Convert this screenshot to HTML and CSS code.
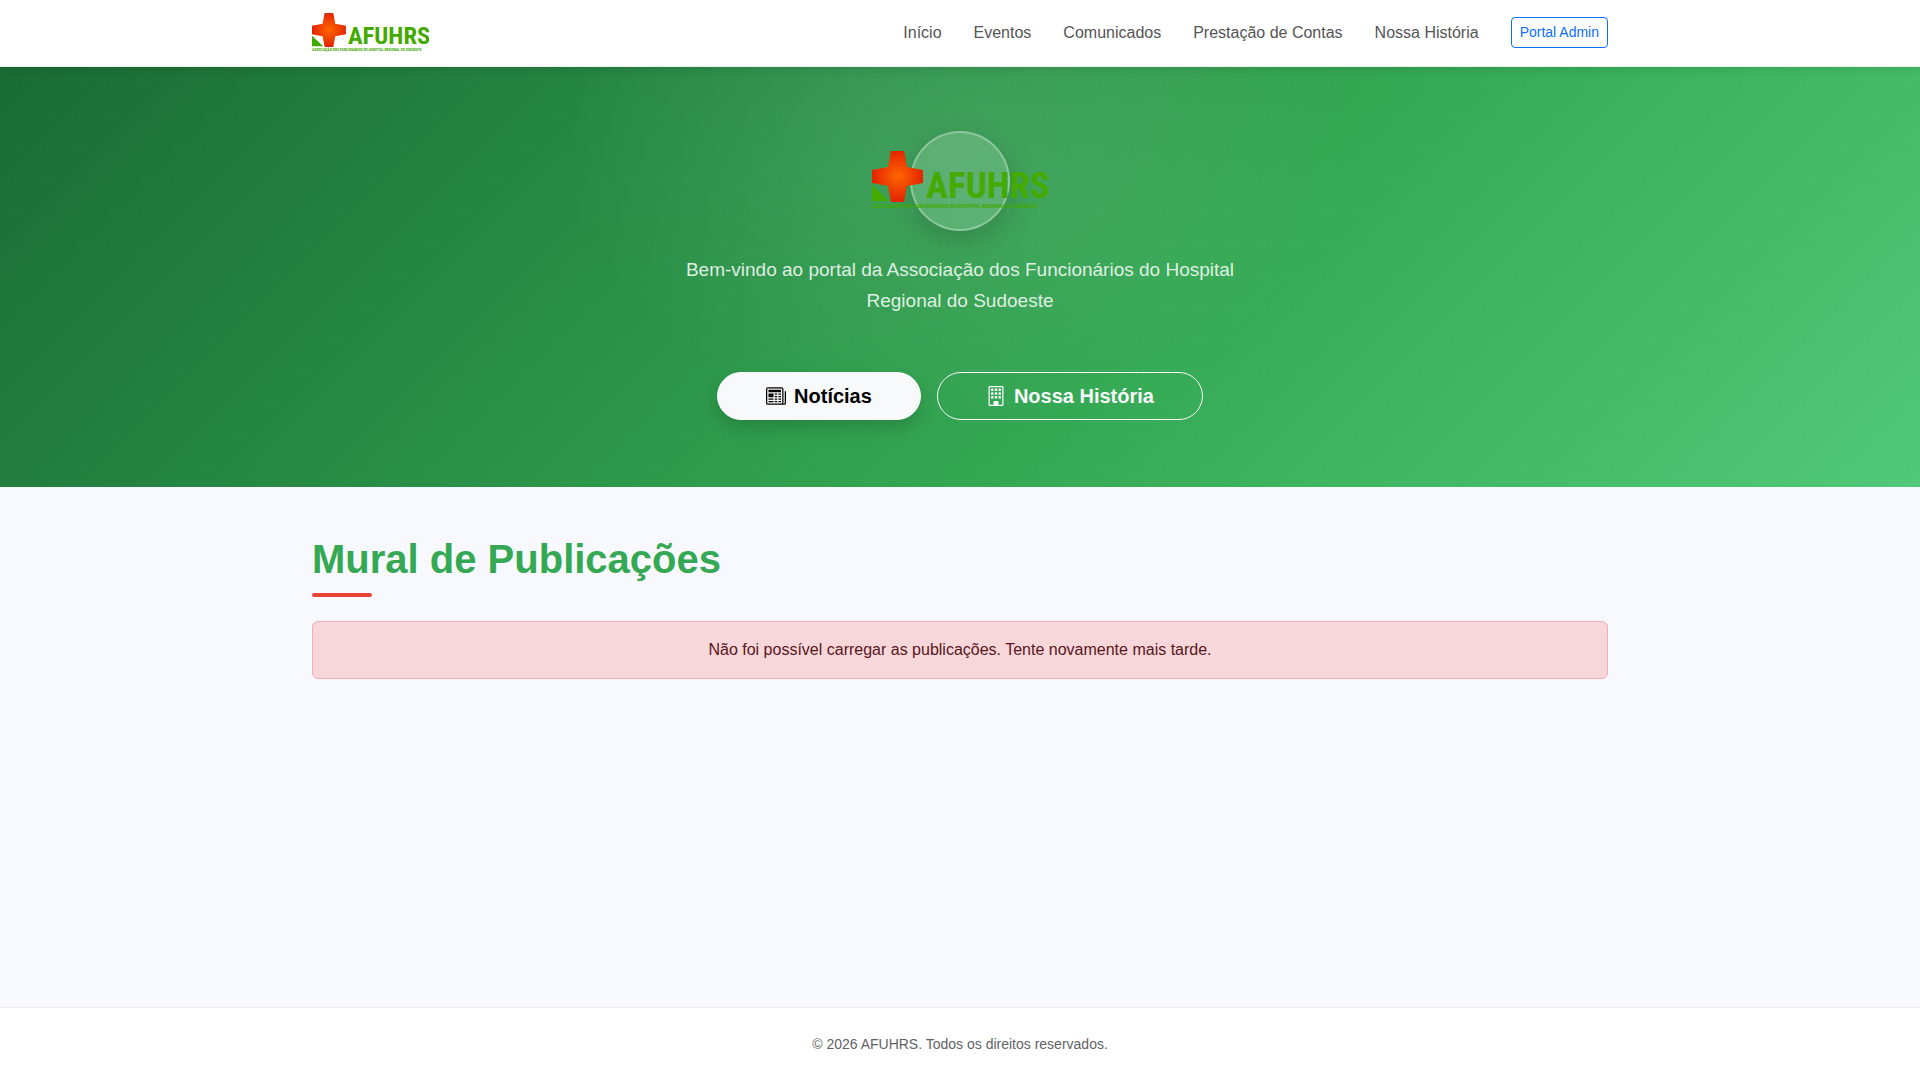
FILE: index.html
```html
<!DOCTYPE html>
<html lang="pt-BR">
<head>
<meta charset="utf-8">
<meta name="viewport" content="width=device-width, initial-scale=1">
<title>AFUHRS</title>
<link rel="stylesheet" href="styles.css">
</head>
<body>
<svg class="defs" aria-hidden="true">
  <defs>
    <radialGradient id="cross-fill" gradientUnits="userSpaceOnUse" cx="52" cy="50" r="58">
      <stop offset="0" stop-color="#ff6600"/>
      <stop offset="1" stop-color="#e01b00"/>
    </radialGradient>
    <symbol id="logo" viewBox="0 0 352 120">
      <path d="M0 68L34 100H0z" fill="#44aa00"/>
      <path d="M38 0H64L70 32L102 38V64L70 70L64 102H38L32 70L0 64V38L32 32z" fill="url(#cross-fill)"/>
      <text x="108" y="94" class="logo-name">AFUHRS</text>
      <text x="0" y="114" class="logo-caption">ASSOCIAÇÃO DOS FUNCIONÁRIOS DO HOSPITAL REGIONAL DO SUDOESTE</text>
    </symbol>
  </defs>
</svg>

<header class="site-header">
  <div class="container header-row">
    <a class="brand" href="#" aria-label="AFUHRS"><svg class="brand-logo" aria-hidden="true"><use href="#logo"/></svg></a>
    <nav class="nav">
      <a href="#">Início</a>
      <a href="#">Eventos</a>
      <a href="#mural">Comunicados</a>
      <a href="#">Prestação de Contas</a>
      <a href="#">Nossa História</a>
      <a class="admin-link" href="#">Portal Admin</a>
    </nav>
  </div>
</header>

<section class="hero">
  <div class="hero-badge"><svg class="hero-logo" aria-hidden="true"><use href="#logo"/></svg></div>
  <p class="hero-text">Bem-vindo ao portal da Associação dos Funcionários do Hospital Regional do Sudoeste</p>
  <div class="hero-actions">
    <a class="btn btn-light" href="#mural">
      <svg class="icon" viewBox="0 0 16 16" fill="currentColor" aria-hidden="true"><path d="M0 2.5A1.5 1.5 0 0 1 1.5 1h11A1.5 1.5 0 0 1 14 2.500v10.528c0 .3-.05.654-.238.972h.738a.5.5 0 0 0 .5-.5v-9a.5.5 0 0 1 1 0v9a1.500 1.500 0 0 1-1.500 1.500H1.497A1.497 1.497 0 0 1 0 13.500zM12 14c.37 0 .654-.211.853-.441.092-.106.147-.279.147-.531V2.500a.5.5 0 0 0-.5-.5h-11a.5.5 0 0 0-.5.5v11c0 .278.223.5.497.5z"/><path d="M2 3h10v2H2zm0 3h4v3H2zm0 4h4v1H2zm0 2h4v1H2zm5-6h2v1H7zm3 0h2v1h-2zM7 8h2v1H7zm3 0h2v1h-2zm-3 2h2v1H7zm3 0h2v1h-2zm-3 2h2v1H7zm3 0h2v1h-2z"/></svg>
      Notícias
    </a>
    <a class="btn btn-outline" href="#">
      <svg class="icon" viewBox="0 0 16 16" fill="currentColor" aria-hidden="true"><path d="M4 2.500a.5.5 0 0 1 .5-.5h1a.5.5 0 0 1 .5.5v1a.5.5 0 0 1-.5.5h-1a.5.5 0 0 1-.5-.5zm3 0a.5.5 0 0 1 .5-.5h1a.5.5 0 0 1 .5.5v1a.5.5 0 0 1-.5.5h-1a.5.5 0 0 1-.5-.5zm3.500-.5a.5.5 0 0 0-.5.5v1a.5.5 0 0 0 .5.5h1a.5.5 0 0 0 .5-.5v-1a.5.5 0 0 0-.5-.5zM4 5.500a.5.5 0 0 1 .5-.5h1a.5.5 0 0 1 .5.5v1a.5.5 0 0 1-.5.5h-1a.5.5 0 0 1-.5-.5zM7.500 5a.5.5 0 0 0-.5.5v1a.5.5 0 0 0 .5.5h1a.5.5 0 0 0 .5-.5v-1a.5.5 0 0 0-.5-.5zm2.500.5a.5.5 0 0 1 .5-.5h1a.5.5 0 0 1 .5.5v1a.5.5 0 0 1-.5.5h-1a.5.5 0 0 1-.5-.5zM4.500 8a.5.5 0 0 0-.5.5v1a.5.5 0 0 0 .5.5h1a.5.5 0 0 0 .5-.5v-1a.5.5 0 0 0-.5-.5zm2.500.5a.5.5 0 0 1 .5-.5h1a.5.5 0 0 1 .5.5v1a.5.5 0 0 1-.5.5h-1a.5.5 0 0 1-.5-.5zm3.500-.5a.5.5 0 0 0-.5.5v1a.5.5 0 0 0 .5.5h1a.5.5 0 0 0 .5-.5v-1a.5.5 0 0 0-.5-.5z"/><path d="M2 1a1 1 0 0 1 1-1h10a1 1 0 0 1 1 1v14a1 1 0 0 1-1 1H3a1 1 0 0 1-1-1zm11 0H3v14h3v-2.500a.5.5 0 0 1 .5-.5h3a.5.5 0 0 1 .5.5V15h3z"/></svg>
      Nossa História
    </a>
  </div>
</section>

<main class="container content" id="mural">
  <h1 class="title">Mural de Publicações</h1>
  <div class="alert" role="alert">Não foi possível carregar as publicações. Tente novamente mais tarde.</div>
</main>

<footer class="site-footer">© 2026 AFUHRS. Todos os direitos reservados.</footer>
</body>
</html>
```
FILE: styles.css
```css
* {
  box-sizing: border-box;
}

body {
  display: flex;
  flex-direction: column;
  min-height: 100vh;
  margin: 0;
  background: #f8f9fe;
  color: #212529;
  font: 16px/24px "Liberation Sans", Arial, sans-serif;
}

a {
  text-decoration: none;
}

.defs {
  position: absolute;
  width: 0;
  height: 0;
}

.container {
  width: 100%;
  max-width: 1320px;
  margin: 0 auto;
  padding: 0 12px;
}

.logo-name {
  fill: #44aa00;
  font: bold 74px "Liberation Sans Narrow", "Roboto Condensed", "Open Sans Condensed", "Liberation Sans", sans-serif;
}

.logo-caption {
  fill: #44aa00;
  font: bold 11px "Liberation Sans Narrow", "Roboto Condensed", "Open Sans Condensed", "Liberation Sans", sans-serif;
}

.site-header {
  position: relative;
  z-index: 1;
  background: #fff;
  border-bottom: 1px solid #eee;
  box-shadow: 0 2px 10px rgba(0, 0, 0, 0.1);
}

.header-row {
  display: flex;
  align-items: center;
  justify-content: space-between;
  min-height: 66px;
  padding-bottom: 1px;
}

.brand-logo {
  display: block;
  width: 117px;
  height: 40px;
}

.nav {
  display: flex;
  flex-wrap: wrap;
  align-items: center;
  gap: 32px;
}

.nav a {
  color: #555;
}

.nav .admin-link {
  padding: 4px 8px;
  border: 1px solid #0d6efd;
  border-radius: 4px;
  color: #0d6efd;
  font-size: 14px;
  line-height: 21px;
}

.hero {
  display: flex;
  flex-direction: column;
  align-items: center;
  padding: 64px 12px 67px;
  background:
    radial-gradient(circle, rgba(255, 255, 255, 0.08) 1px, transparent 1px) 0 0 / 32px 32px,
    radial-gradient(ellipse 400px 280px at 50% 20%, rgba(255, 255, 255, 0.1), transparent),
    linear-gradient(135deg, #1a6b35 0%, #34a853 60%, #52c97a 100%);
  text-align: center;
}

.hero-badge {
  display: flex;
  align-items: center;
  justify-content: center;
  width: 100px;
  height: 100px;
  border: 2px solid rgba(255, 255, 255, 0.3);
  border-radius: 50%;
  background: rgba(255, 255, 255, 0.15);
  box-shadow: 0 8px 32px rgba(0, 0, 0, 0.2);
}

.hero-logo {
  flex: none;
  width: 176px;
  height: 60px;
}

.hero-text {
  max-width: 600px;
  margin: 23px 0 56px;
  color: rgba(255, 255, 255, 0.85);
  font-size: 19px;
  line-height: 31px;
}

.hero-actions {
  display: flex;
  flex-wrap: wrap;
  justify-content: center;
  gap: 16px;
}

.btn {
  display: flex;
  align-items: center;
  gap: 8px;
  padding: 8px 48px;
  border: 1px solid #f8f9fa;
  border-radius: 24px;
  font-size: 20px;
  font-weight: 700;
  line-height: 30px;
}

.btn-light {
  background: #f8f9fa;
  color: #000;
  box-shadow: 0 8px 16px rgba(0, 0, 0, 0.15);
}

.btn-outline {
  color: #f8f9fa;
}

.icon {
  width: 20px;
  height: 20px;
}

.content {
  flex: 1;
  padding-top: 48px;
  padding-bottom: 48px;
}

.title {
  margin: 0 0 24px;
  color: #34a853;
  font-size: 40px;
  line-height: 48px;
}

.title::after {
  content: "";
  display: block;
  width: 60px;
  height: 4px;
  margin-top: 10px;
  border-radius: 2px;
  background: #ea4335;
}

.alert {
  padding: 16px;
  border: 1px solid #f1aeb5;
  border-radius: 6px;
  background: #f8d7da;
  color: #58151c;
  text-align: center;
}

.site-footer {
  padding: 24px 12px;
  border-top: 1px solid #eee;
  background: #fff;
  color: #5f6368;
  font-size: 14px;
  text-align: center;
}
```
